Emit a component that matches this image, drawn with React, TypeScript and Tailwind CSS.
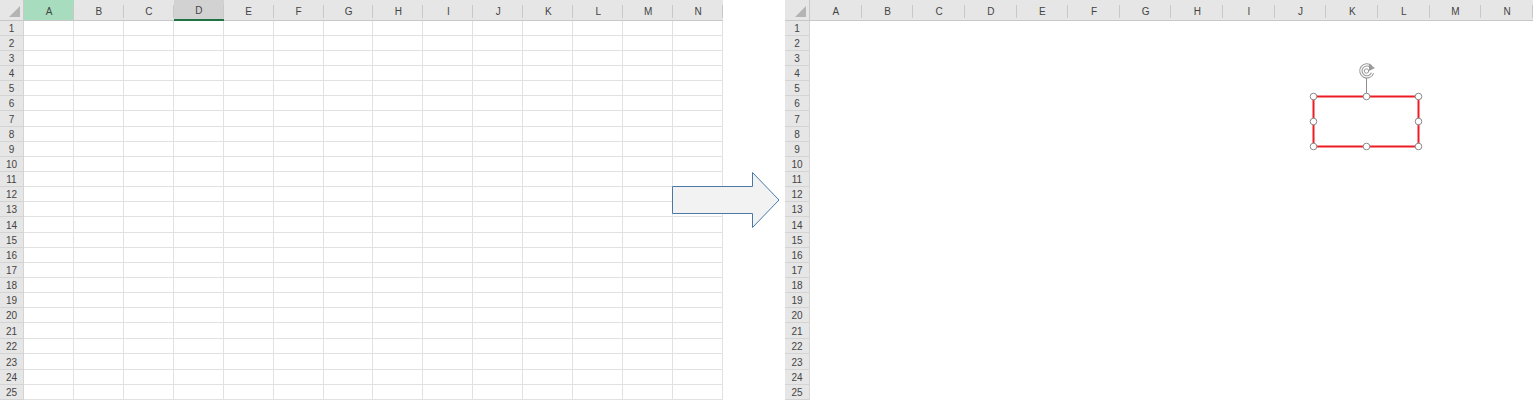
import { Fragment } from "react";

const COLS = ["A", "B", "C", "D", "E", "F", "G", "H", "I", "J", "K", "L", "M", "N"];
// rows are mostly 15px, a few are a pixel taller (screen scaling)
const ROW_HEIGHTS = Array.from({ length: 25 }, (_, i) => ([6, 13, 20, 22].includes(i) ? 16 : 15));

function CornerCell() {
  return (
    <div className="relative h-[21px] border-r border-b border-[#c8c8c8] bg-[#e6e6e6]">
      <svg className="absolute right-[3px] bottom-[3px]" width="11" height="11" viewBox="0 0 11 11">
        <polygon points="11,0 11,11 0,11" fill="#b4b4b4" />
      </svg>
    </div>
  );
}

function ColHeader({ label, state }: { label: string; state?: "active" | "selected" }) {
  const bg = state === "active" ? "bg-[#a8dcbf]" : state === "selected" ? "bg-[#d2d2d2]" : "bg-[#e6e6e6]";
  return (
    <div
      className={`relative flex h-[21px] items-center justify-center pt-[2px] text-[10px] text-[#444] ${bg} ${
        state === "selected" ? "border-b-2 border-[#217346]" : "border-b border-[#c8c8c8]"
      }`}
    >
      {label}
      <span className="absolute right-0 top-[5px] h-[13px] w-px bg-[#c8c8c8]" />
    </div>
  );
}

function Sheet({ gridlines, width, rowHeader }: { gridlines: boolean; width: number; rowHeader: number }) {
  return (
    <div
      className="grid shrink-0 font-['Liberation_Sans',Arial,sans-serif]"
      style={{ width, gridTemplateColumns: `${rowHeader}px repeat(14, minmax(0, 1fr))` }}
    >
      <CornerCell />
      {COLS.map((c) => (
        <ColHeader key={c} label={c} state={gridlines ? (c === "A" ? "active" : c === "D" ? "selected" : undefined) : undefined} />
      ))}
      {ROW_HEIGHTS.map((h, r) => (
        <Fragment key={r}>
          <div
            className="flex items-center justify-center border-r border-b border-[#d4d4d4] bg-[#e6e6e6] pt-px text-[10px] text-[#444]"
            style={{ height: h }}
          >
            {r + 1}
          </div>
          {COLS.map((c) => (
            <div
              key={c}
              className={gridlines ? "border-r border-b border-[#e1e1e1] bg-white" : "bg-white"}
              style={{ height: h }}
            />
          ))}
        </Fragment>
      ))}
    </div>
  );
}

function BlockArrow() {
  return (
    <svg className="absolute left-[671px] top-[171px]" width="110" height="58" viewBox="0 0 110 58">
      <polygon
        points="1.5,15.5 81.5,15.5 81.5,1.5 108,29 81.5,56.5 81.5,42.5 1.5,42.5"
        fill="#f2f2f2"
        stroke="#4a78a8"
        strokeWidth="1"
      />
    </svg>
  );
}

function SelectedShape() {
  const xs = [4.5, 57.5, 109.5];
  const ys = [34.5, 59.5, 84.5];
  const handles: [number, number][] = [];
  ys.forEach((y, yi) =>
    xs.forEach((x, xi) => {
      if (!(yi === 1 && xi === 1)) handles.push([x, y]);
    })
  );
  return (
    <svg className="absolute left-[1309px] top-[62px]" width="116" height="90" viewBox="0 0 116 90">
      <rect x="4.5" y="34.5" width="105" height="50" fill="none" stroke="#ec1c24" strokeWidth="2" />
      <line x1="57.5" y1="15" x2="57.5" y2="34" stroke="#8c8c8c" strokeWidth="1" />
      {/* rotate handle */}
      <path d="M63.5 11 A6 6 0 1 1 62 4.5" fill="none" stroke="#9a9a9a" strokeWidth="3.4" />
      <path d="M63.5 11 A6 6 0 1 1 62 4.5" fill="none" stroke="#ffffff" strokeWidth="1.2" />
      <polygon points="60,2 66,6 60,9" fill="#9a9a9a" />
      <circle cx="57.5" cy="9" r="2.2" fill="none" stroke="#9a9a9a" strokeWidth="1" />
      {handles.map(([x, y]) => (
        <circle key={`${x}-${y}`} cx={x} cy={y} r="3.3" fill="#fff" stroke="#8a8a8a" strokeWidth="1" />
      ))}
    </svg>
  );
}

export default function App() {
  return (
    <div className="relative h-[404px] w-[1533px] overflow-hidden bg-white">
      <div className="flex items-start gap-[62px]">
        <Sheet gridlines width={723} rowHeader={24} />
        <Sheet gridlines={false} width={748} rowHeader={25} />
      </div>
      <BlockArrow />
      <SelectedShape />
    </div>
  );
}
